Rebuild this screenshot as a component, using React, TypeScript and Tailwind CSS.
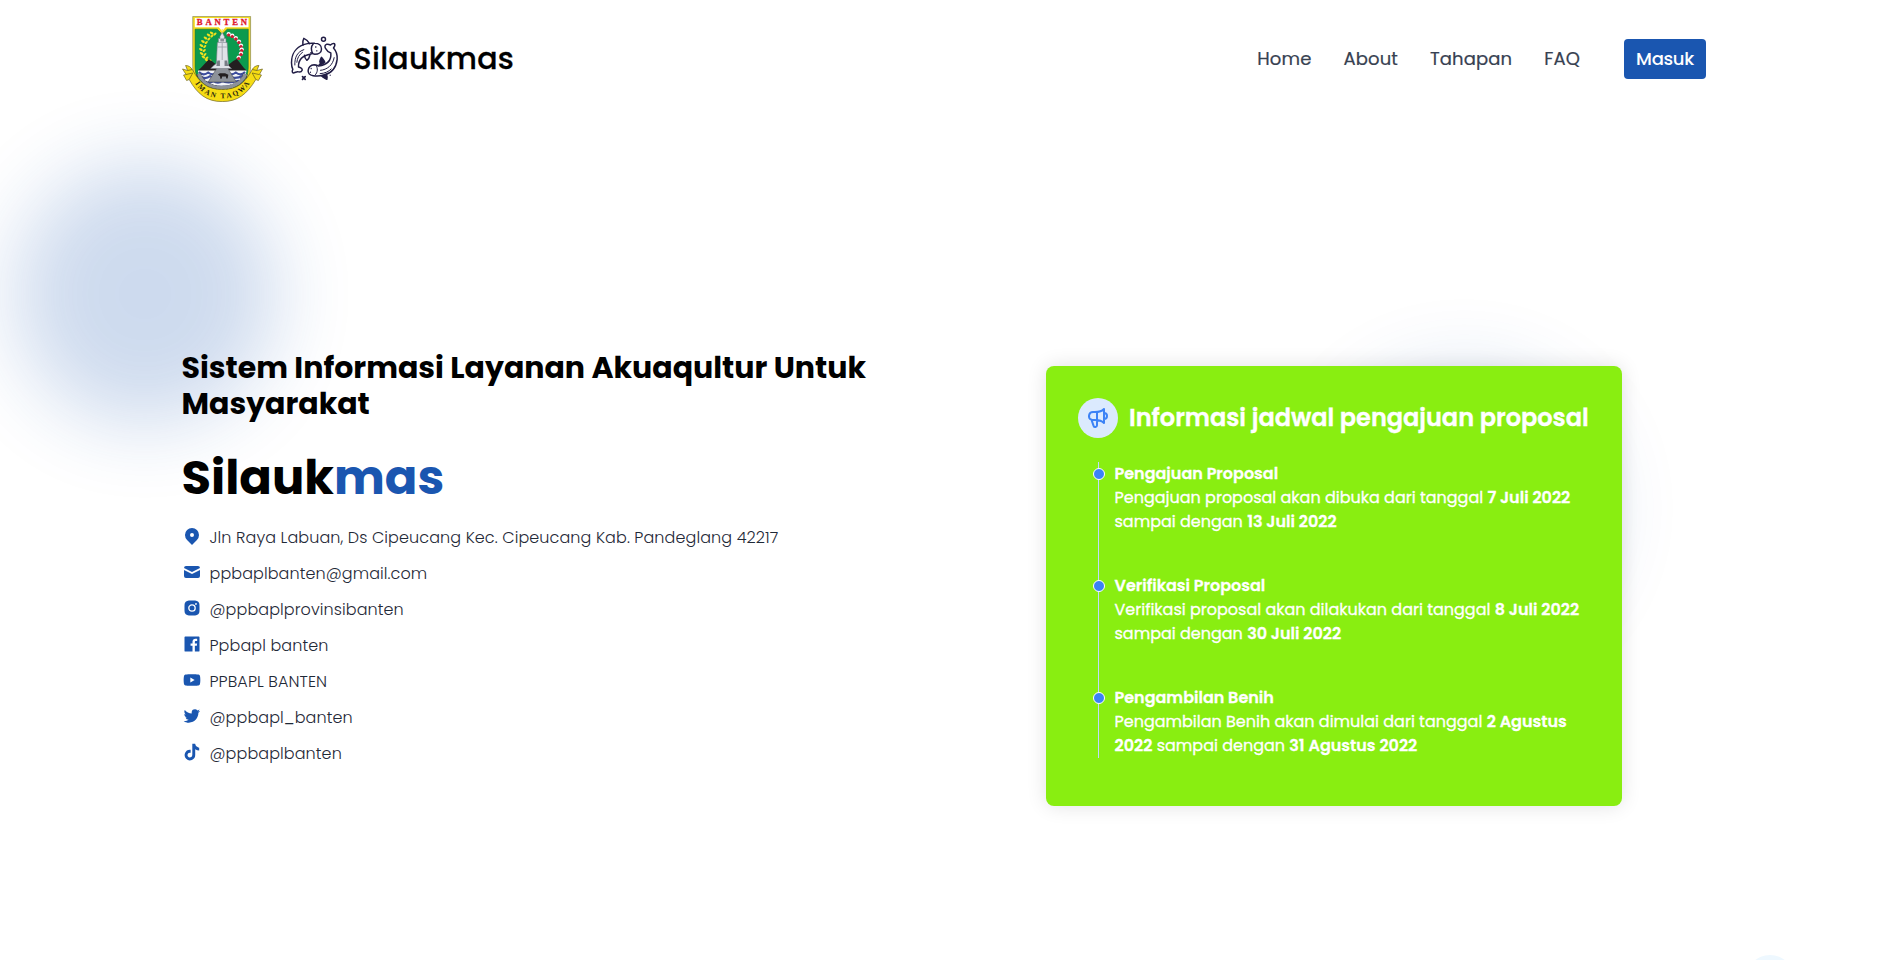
import type { ReactNode } from "react";
import { BiLogoFacebookSquare, BiLogoInstagramAlt, BiLogoTiktok, BiLogoTwitter, BiLogoYoutube } from "react-icons/bi";

type IconProps = { className?: string };

function PinIcon({ className }: IconProps) {
  return (
    <svg viewBox="0 0 20 20" className={className} fill="currentColor">
      <path fillRule="evenodd" d="M5.05 4.05a7 7 0 119.9 9.9L10 18.9l-4.95-4.95a7 7 0 010-9.9zM10 11a2 2 0 100-4 2 2 0 000 4z" />
    </svg>
  );
}

function MailIcon({ className }: IconProps) {
  return (
    <svg viewBox="0 0 20 20" className={className} fill="currentColor">
      <path d="M2.003 5.884L10 9.882l7.997-3.998A2 2 0 0016 4H4a2 2 0 00-1.997 1.884z" />
      <path d="M18 8.118l-8 4-8-4V14a2 2 0 002 2h12a2 2 0 002-2V8.118z" />
    </svg>
  );
}

function MegaphoneIcon({ className }: IconProps) {
  return (
    <svg viewBox="0 0 24 24" className={className} fill="none" stroke="currentColor" strokeWidth="2" strokeLinecap="round" strokeLinejoin="round">
      <path d="M11 5.882V19.24a1.76 1.76 0 01-3.417.592l-2.147-6.15M18 13a3 3 0 100-6M5.436 13.683A4.001 4.001 0 017 6h1.832c4.1 0 7.625-1.234 9.168-3v14c-1.543-1.766-5.067-3-9.168-3H7a3.988 3.988 0 01-1.564-.317z" />
    </svg>
  );
}

const navItems = ["Home", "About", "Tahapan", "FAQ"];

const contacts = [
  { Icon: PinIcon, label: "Jln Raya Labuan, Ds Cipeucang Kec. Cipeucang Kab. Pandeglang 42217" },
  { Icon: MailIcon, label: "ppbaplbanten@gmail.com" },
  { Icon: BiLogoInstagramAlt, label: "@ppbaplprovinsibanten" },
  { Icon: BiLogoFacebookSquare, label: "Ppbapl banten" },
  { Icon: BiLogoYoutube, label: "PPBAPL BANTEN" },
  { Icon: BiLogoTwitter, label: "@ppbapl_banten" },
  { Icon: BiLogoTiktok, label: "@ppbaplbanten" },
];

const schedule: { title: string; body: ReactNode }[] = [
  {
    title: "Pengajuan Proposal",
    body: (
      <>
        Pengajuan proposal akan dibuka dari tanggal <b className="font-semibold">7 Juli 2022</b> sampai dengan{" "}
        <b className="font-semibold">13 Juli 2022</b>
      </>
    ),
  },
  {
    title: "Verifikasi Proposal",
    body: (
      <>
        Verifikasi proposal akan dilakukan dari tanggal <b className="font-semibold">8 Juli 2022</b> sampai dengan{" "}
        <b className="font-semibold">30 Juli 2022</b>
      </>
    ),
  },
  {
    title: "Pengambilan Benih",
    body: (
      <>
        Pengambilan Benih akan dimulai dari tanggal <b className="font-semibold">2 Agustus 2022</b> sampai dengan{" "}
        <b className="font-semibold">31 Agustus 2022</b>
      </>
    ),
  },
];

const rice = [
  [31, 17], [28, 19], [25, 22], [22.5, 25.5], [21, 29.5], [20.5, 33.5], [21.2, 37.5], [23, 41], [26, 44],
];
const cotton = [
  [46, 18], [49.5, 19.5], [53, 22], [56, 25.5], [58, 29.5], [58.7, 33.5], [58, 37.5], [55.8, 41.5],
];

function BantenEmblem() {
  return (
    <svg viewBox="0.5 0 79 86" preserveAspectRatio="none" className="h-[86px] w-[81px]">
      <path d="M11 .4h56.4v50c0 17-12 27-28.2 32C23 77.4 11 67.4 11 50.4z" fill="#f5dc1c" stroke="#8a8a55" strokeWidth=".7" />
      <path d="M13 2h52.4v9.2H43l-3.3 4-3.3-4H13z" fill="#fff" />
      <path d="M13.3 13.2h21.5l4.9 5 4.9-5h20.5V51c0 14-10 22.5-26 27.5C23 73.5 13.3 65 13.3 51z" fill="#0b9a4e" stroke="#0a6b38" strokeWidth=".6" />
      <text x="39.5" y="9" textAnchor="middle" textLength="49" className="fill-[#e0182d] font-['Liberation_Serif',serif] text-[8.5px] font-bold" stroke="#e0182d" strokeWidth=".3">
        BANTEN
      </text>
      {rice.map(([x, y], i) => (
        <g key={i}>
          <ellipse cx={x - 1.6} cy={y} rx="2" ry="1.1" transform={`rotate(35 ${x - 1.6} ${y})`} fill="#f0e01e" />
          <ellipse cx={x + 1.7} cy={y + 1} rx="1.9" ry="1" transform={`rotate(-45 ${x + 1.7} ${y + 1})`} fill="#f0e01e" />
        </g>
      ))}
      {cotton.map(([x, y], i) => (
        <g key={i}>
          <circle cx={x} cy={y} r="2.1" fill="#fff" />
          <path d={`M${x - 2} ${y + 0.8}l2-1.5 2 1.5-1 1.6h-2z`} fill="#c81f35" />
        </g>
      ))}
      <path d="M15.5 55c5-4 7.5-8 11-11.5l3 1.5 5 4h11l5-4 3.5-2c3 3.5 5.5 8 10 12z" fill="#231f20" />
      <path d="M16 54.5h47.5c-1 9-8 16.5-24 20.5-15-4-22.5-11.5-23.5-20.5z" fill="#f4f5f8" />
      <path d="M17 56c3 3 6 3 9 .5 3 2.5 6 2.5 9 0 3 2.5 6 2.5 9 0 3 2.5 6 2.5 9 0 3 2.5 6 2.5 9-.5M18 60.500c4 2.500 7 2 10-.3 3 2.500 6 2.500 9 0 3 2.500 6 2.500 9 0 4 2.500 8 2.500 14-.2M22 65.500c4 2 7 1.500 9-.5 3 2.300 6 2.300 9 0 3 2.300 7 2.300 16-.2M29 69.500c6 1.500 14 1.500 21 0" fill="none" stroke="#3d4d9e" strokeWidth="2.1" />
      <path d="M35.5 50.5h8.5l9.5 15.5H26z" fill="#8d9299" stroke="#4b4e54" strokeWidth=".6" />
      <path d="M35.5 58.5l2-1.3h5l3.2 1.5-.7 3.8h-1.3l-.4-2h-3.6l-.6 2.2h-1.2l-.3-2.2z" fill="#231f20" />
      <path d="M16.5 58c3 8.5 11 14.5 23 14.5S60 66.5 62.8 58" fill="none" stroke="#3f4247" strokeWidth="5.2" strokeDasharray="2.6 1" />
      <path d="M16.8 58c3 8 11 13.5 22.7 13.5S59.6 66 62.5 58" fill="none" stroke="#8d9299" strokeWidth="3.3" />
      <path d="M39.7 13v5.5" stroke="#e9e36a" strokeWidth="1" />
      <path d="M37.5 20.5l2.2-4 2.2 4v2h1.5v4h1.1l1.3 23 3 3H28.5l3-3 2.5-2 1-21h1v-4h1.5z" fill="#dfe2e8" stroke="#767b84" strokeWidth=".6" />
      <path d="M36 26.5h7.5M35.6 31h8.5M39.7 27v17" stroke="#979ca6" strokeWidth=".8" />
      <path d="M37.9 22.5h3.7v3h-3.7z" fill="#8b9099" />
      <path d="M35 44.5h2.5V50H34zM42 44.5h2.5l1 5.5H42z" fill="#777c85" />
      <path d="M1 53l5 1.5-2-5c3 0 5 1.5 6.500 4C18 67 25 73.500 39.700 73.500S62 67 69 53.500c1.500-2.500 3.500-4 6.500-4l-2 5 5.500-1.500-3 5.500 2 .5-3 5.500-2.500-1C64 78 55 85.600 39.700 85.600S15.500 78 7.500 63.500l-2.500 1L2 59l2.500-.5z" fill="#f6dc14" stroke="#6d6520" strokeWidth=".7" />
      <path d="M6 54.5l4.5-1M4.5 58.5l6.5-1.5-3.5 6.5M73.5 54.5l-4.5-1M75.5 58.5L69 57l3.5 6.5" fill="none" stroke="#746b18" strokeWidth=".8" />
      <path id="ribbon" d="M12.5 66.5C19 76.5 27 82.3 39.7 82.3S61 76.5 68 65.5" fill="none" />
      <text className="fill-[#2a2710] font-['Liberation_Serif',serif] text-[7.2px] font-bold">
        <textPath href="#ribbon" startOffset="1" textLength="64">IMAN TAQWA</textPath>
      </text>
    </svg>
  );
}

function FishLogo() {
  return (
    <svg viewBox="60 50 146 138" className="h-[46px] w-[49px]" fill="none" stroke="#211d45" strokeWidth="4.4" strokeLinecap="round" strokeLinejoin="round">
      <path d="M100 76c-22 8-36 28-36 54 0 10 2 16 4 20-3 6-2 10 2 11 5-1 9-3 12-4 6 2 12 1 14-4 1-4-4-8-11-10-1-20 8-34 38-39" />
      <path d="M100 76c10-4 24-5 34-4 12 0 20 7 20 17s-9 16-20 16c-5-1-9-2-12-5M129 74c-7 7-7 20-1 29" />
      <path d="M98 77c-1-8 0-15 3-20 7 3 13 8 17 16M103 108c0 6 3 11 7 15 5-4 8-9 9-15" />
      <path d="M74 137c-1-24 8-40 27-46M80 129c1-13 7-23 17-30" strokeWidth="3" />
      <path d="M166 87c-3-5-2-10 3-12 5-1 8 0 12 2 4-4 8-6 12-4 3 4 0 9-3 13 8 9 12 21 11 34-3 24-17 42-40 47-10 3-22 4-32 2-10-2-16-8-15-16 1-9 8-16 18-17 5 0 9 2 13 4 24-3 39-15 37-39-7-2-12-7-16-14z" />
      <path d="M137 138c7 8 6 21-2 29M151 153c20-2 37-15 41-38M150 163c15-1 25-6 33-14" strokeWidth="3" />
      <path d="M149 128c0-6 3-10 5-14 4 5 8 9 10 15-5 5-10 7-17 7M154 170c6 4 10 7 16 10 1-5 1-10-1-15z" fill="#211d45" />
      <circle cx="160" cy="60" r="6" />
      <path d="M97 172l8 8M105 172l-8 8" strokeWidth="5" />
      <path d="M137 82v2M140 94v1M123 147v1M121 158v1M180 167v1" strokeWidth="3.5" />
    </svg>
  );
}

function Header() {
  return (
    <header className="relative flex h-[118px] items-center justify-between pr-[193px] pl-[181.5px]">
      <div className="flex items-center">
        <BantenEmblem />
        <div className="ml-[27px] flex items-center gap-[15px]">
          <FishLogo />
          <span className="text-3xl font-medium tracking-[0.3px] text-black [-webkit-text-stroke:0.3px_black]">Silaukmas</span>
        </div>
      </div>
      <nav className="flex items-center text-lg text-[#374151]">
        <div className="flex gap-8">
          {navItems.map((item) => (
            <a key={item} className="tracking-[0.12px] [-webkit-text-stroke:0.2px_#374151]">
              {item}
            </a>
          ))}
        </div>
        <button className="ml-11 flex h-10 w-[82px] items-center justify-center rounded bg-[#1a56b0] font-medium tracking-[-0.3px] text-white">
          Masuk
        </button>
      </nav>
    </header>
  );
}

function ScheduleCard() {
  return (
    <section className="relative mt-4 h-[440px] w-[576px] rounded-lg bg-[#89ee11] p-8 text-white shadow-[0_0_20px_rgba(0,0,0,0.12)]">
      <div className="flex items-center gap-3">
        <span className="flex size-10 items-center justify-center rounded-full bg-[#dbeafe] text-[#3b82f6]">
          <MegaphoneIcon className="size-6" />
        </span>
        <h2 className="-ml-px text-2xl font-semibold whitespace-nowrap [-webkit-text-stroke:0.4px_white]">
          Informasi jadwal pengajuan proposal
        </h2>
      </div>
      <ol className="mt-6 ml-5 flex flex-col gap-10 border-l border-[#bfdbfe] [-webkit-text-stroke:0.3px_white]">
        {schedule.map(({ title, body }) => (
          <li key={title} className="flex items-start">
            <span className="mt-1.5 -ml-[6.5px] size-3 shrink-0 rounded-full border border-white bg-[#3b82f6]" />
            <div className="ml-2.5 w-[470px]">
              <h3 className="font-semibold">{title}</h3>
              <p>{body}</p>
            </div>
          </li>
        ))}
      </ol>
    </section>
  );
}

export default function App() {
  return (
    <div className="relative h-[960px] overflow-hidden bg-white font-[Poppins,sans-serif]">
      <div className="absolute top-[163px] left-[14px] size-[262px] rounded-full bg-[#1a56b0] opacity-[0.21] blur-[40px]" />
      <div className="absolute top-[374px] left-[1330px] size-[268px] rounded-full bg-[#1a56b0] opacity-[0.16] blur-[44px]" />
      <Header />
      <main className="relative flex items-start pt-[232px] pl-[181.5px]">
        <section className="w-[864.5px]">
          <h2 className="w-[720px] text-3xl leading-9 font-bold text-black">
            Sistem Informasi Layanan Akuaqultur Untuk Masyarakat
          </h2>
          <h1 className="mt-8 text-5xl leading-none font-bold text-black">
            Silauk<span className="text-[#1a56b0]">mas</span>
          </h1>
          <ul className="mt-6 flex flex-col gap-3">
            {contacts.map(({ Icon, label }) => (
              <li key={label} className="flex items-start gap-2">
                <Icon className="size-5 text-[#1a56b0]" />
                <span className="font-light tracking-[0.09px] text-[#1f2937]">{label}</span>
              </li>
            ))}
          </ul>
        </section>
        <ScheduleCard />
      </main>
      <div className="absolute top-[955px] left-[1746px] size-12 rounded-full bg-[#eef8ff]" />
    </div>
  );
}
